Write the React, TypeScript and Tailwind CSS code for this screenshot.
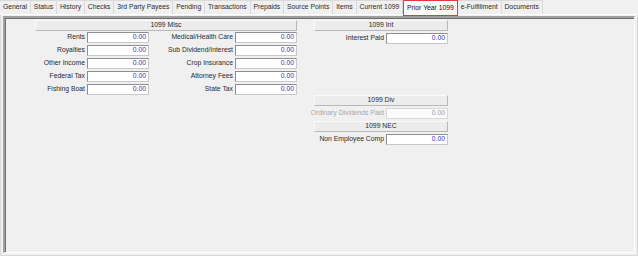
import React from 'react';

const tabs = [
  'General',
  'Status',
  'History',
  'Checks',
  '3rd Party Payees',
  'Pending',
  'Transactions',
  'Prepaids',
  'Source Points',
  'Items',
  'Current 1099',
  'Prior Year 1099',
  'e-Fulfillment',
  'Documents',
];

const miscLeft = ['Rents', 'Royalties', 'Other Income', 'Federal Tax', 'Fishing Boat'];
const miscRight = ['Medical/Health Care', 'Sub Dividend/Interest', 'Crop Insurance', 'Attorney Fees', 'State Tax'];

function Header({ title, className = '' }: { title: string; className?: string }) {
  return (
    <div
      className={`h-[11px] flex items-center justify-center bg-[#ececec] border border-t-[#fafafa] border-l-[#fafafa] border-r-[#b8b8b8] border-b-[#b8b8b8] text-[#2a2a2a] leading-none ${className}`}
    >
      {title}
    </div>
  );
}

function Field({ disabled = false }: { disabled?: boolean }) {
  return (
    <div
      className={`w-[62px] h-[11px] flex items-center justify-end pr-[2px] leading-none border ${
        disabled
          ? 'bg-[#fbfbfb] border-[#d8d8d8] text-[#9a9a9a]'
          : 'bg-white border-t-[#8e8e8e] border-l-[#8e8e8e] border-r-[#c8c8c8] border-b-[#c8c8c8] text-[#3535b0]'
      }`}
    >
      0.00
    </div>
  );
}

function Row({ label, labelW, disabled = false }: { label: string; labelW: string; disabled?: boolean }) {
  return (
    <div className="flex items-center h-[11px]">
      <div
        className={`${labelW} pr-[2px] flex justify-end whitespace-nowrap leading-none ${
          disabled ? 'text-[#a8a8a8]' : 'text-[#2a2a2a]'
        }`}
      >
        {label}
      </div>
      <Field disabled={disabled} />
    </div>
  );
}

export default function App() {
  return (
    <div
      className="w-[638px] h-[256px] bg-[#f0f0f0] overflow-hidden text-[6.8px]"
      style={{ fontFamily: '"Liberation Sans", Arial, sans-serif' }}
    >
      {/* tab strip */}
      <div className="h-[14px] flex items-stretch relative z-10">
        {tabs.map((t) => {
          const active = t === 'Prior Year 1099';
          return (
            <div
              key={t}
              className={`px-[2.9px] flex items-center whitespace-nowrap leading-none ${
                active
                  ? 'h-[16px] bg-[#fbfbfb] border border-[#e0393e] text-[#111]'
                  : 'h-[14px] bg-[#f0f0f0] border-r border-t border-[#dadada] text-[#2a2a2a]'
              }`}
            >
              {t}
            </div>
          );
        })}
      </div>

      {/* tab page */}
      <div className="h-[242px] border border-[#d9d9d9] border-t-white px-[2px] pt-[1px] pb-[2px]">
        <div className="h-full border-t-2 border-l-2 border-t-[#a0a0a0] border-l-[#a0a0a0] border-r border-b border-r-white border-b-white shadow-[inset_1px_1px_0_#6e6e6e] pl-[30px] pt-[2px] flex gap-[17px]">
          {/* 1099 Misc */}
          <div className="w-[262px]">
            <Header title="1099 Misc" />
            <div className="mt-[1px] flex flex-col gap-[2px]">
              {miscLeft.map((l, i) => (
                <div key={l} className="flex">
                  <Row label={l} labelW="w-[52px]" />
                  <Row label={miscRight[i]} labelW="w-[86px]" />
                </div>
              ))}
            </div>
          </div>

          {/* right column */}
          <div className="w-[134px] flex flex-col">
            <Header title="1099 Int" />
            <div className="mt-[2px]">
              <Row label="Interest Paid" labelW="w-[72px]" />
            </div>

            <Header title="1099 Div" className="mt-[51px]" />
            <div className="mt-[2px]">
              <Row label="Ordinary Dividends Paid" labelW="w-[72px]" disabled />
            </div>

            <Header title="1099 NEC" className="mt-[2px]" />
            <div className="mt-[2px]">
              <Row label="Non Employee Comp" labelW="w-[72px]" />
            </div>
          </div>
        </div>
      </div>
    </div>
  );
}
